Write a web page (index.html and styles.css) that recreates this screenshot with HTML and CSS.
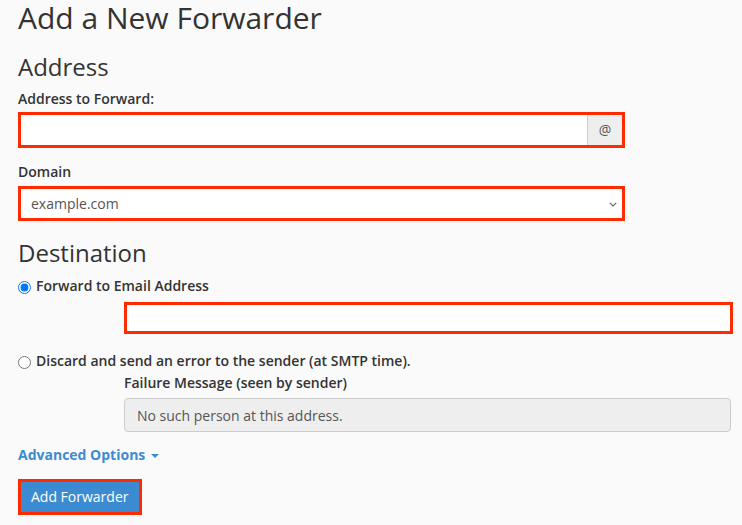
FILE: index.html
```html
<!DOCTYPE html>
<html lang="en">
<head>
<meta charset="utf-8">
<title>Add a New Forwarder</title>
<link rel="stylesheet" href="styles.css">
</head>
<body>
<main class="page">
  <h1 class="title">Add a New Forwarder</h1>

  <h2 class="section section-address">Address</h2>
  <label class="label label-first" for="email">Address to Forward:</label>
  <div class="input-group hl">
    <input id="email" class="group-input" type="text">
    <span class="addon">@</span>
  </div>

  <label class="label label-domain" for="domain">Domain</label>
  <div class="select-wrap hl">
    <select id="domain" class="select">
      <option>example.com</option>
    </select>
    <svg class="chev" width="8" height="5" viewBox="0 0 8 5" aria-hidden="true"><path d="M0.8 0.8 L4 4 L7.2 0.8" fill="none" stroke="#666" stroke-width="1.2"/></svg>
  </div>

  <h2 class="section section-dest">Destination</h2>
  <label class="radio-row radio-first">
    <input type="radio" name="dest" class="radio" checked>
    <span>Forward to Email Address</span>
  </label>
  <input class="fwd-input hl" type="text">

  <label class="radio-row radio-second">
    <input type="radio" name="dest" class="radio">
    <span>Discard and send an error to the sender (at SMTP time).</span>
  </label>
  <div class="fail-block">
    <label class="label label-fail" for="fail">Failure Message (seen by sender)</label>
    <input id="fail" class="fail-input" type="text" value="No such person at this address." disabled>
  </div>

  <a class="adv-link" href="#">Advanced Options <span class="caret"></span></a>

  <div class="actions">
    <button class="btn" type="button">Add Forwarder</button>
  </div>
</main>
</body>
</html>
```

FILE: styles.css
```css
* { box-sizing: border-box; }

html, body {
  margin: 0;
  padding: 0;
  background: #fafafa;
}

body {
  font-family: "Open Sans", "Noto Sans", "Liberation Sans", sans-serif;
  color: #333;
  font-size: 14px;
  line-height: 20px;
}

.page {
  padding: 0 0 0 18px;
  display: flex;
  flex-direction: column;
  align-items: flex-start;
}

.title {
  margin: 0;
  font-size: 30px;
  line-height: 36px;
  font-weight: 400;
  color: #333;
}

.section {
  margin: 0;
  font-size: 24px;
  line-height: 30px;
  font-weight: 400;
  color: #333;
}
.section-address { margin-top: 16px; }
.section-dest { margin-top: 17px; }

.label {
  display: block;
  font-weight: 600;
  font-size: 14px;
  line-height: 20px;
  color: #333;
}
.label-first { margin-top: 7px; }
.label-domain { margin-top: 14px; }

.hl { border: 3px solid #ff2a00; }

.input-group {
  margin-top: 3px;
  width: 607px;
  height: 36px;
  display: flex;
  background: #fff;
}
.group-input {
  flex: 1;
  border: 0;
  outline: none;
  background: #fff;
  font: inherit;
  padding: 0 10px;
}
.addon {
  width: 35px;
  flex: none;
  background: #eee;
  border-left: 1px solid #ccc;
  display: flex;
  align-items: center;
  justify-content: center;
  color: #555;
  font-size: 14px;
}

.select-wrap {
  margin-top: 4px;
  width: 607px;
  height: 35px;
  position: relative;
  background: #fff;
}
.select {
  appearance: none;
  -webkit-appearance: none;
  width: 100%;
  height: 100%;
  border: 0;
  outline: none;
  background: #fff;
  font: inherit;
  color: #555;
  padding: 0 0 0 10px;
}
.chev {
  position: absolute;
  right: 5px;
  top: 13px;
  pointer-events: none;
}

.radio-row {
  display: flex;
  align-items: center;
  gap: 5px;
  font-weight: 600;
  line-height: 20px;
  color: #333;
}
.radio-first { margin-top: 8px; }
.radio-second { margin-top: 17px; }

.radio {
  margin: 2px 0 0 0;
  width: 13px;
  height: 13px;
  flex: none;
}

.fwd-input {
  margin: 6px 0 0 106px;
  width: 609px;
  height: 32px;
  background: #fff;
  outline: none;
  font: inherit;
  padding: 0 10px;
}

.fail-block {
  margin-left: 106px;
  margin-top: 2px;
  display: flex;
  flex-direction: column;
}
.fail-input {
  margin-top: 5px;
  width: 607px;
  height: 34px;
  border: 1px solid #ccc;
  border-radius: 4px;
  background: #eee;
  color: #555;
  font: inherit;
  padding: 0 12px;
  opacity: 1;
  -webkit-text-fill-color: #555;
}

.adv-link {
  margin-top: 13px;
  font-weight: 700;
  color: #3d8ad0;
  text-decoration: none;
  line-height: 20px;
  display: inline-flex;
  align-items: center;
}
.caret {
  display: inline-block;
  width: 0;
  height: 0;
  margin-left: 6px;
  margin-top: 2px;
  border-top: 4px solid #3d8ad0;
  border-left: 4px solid transparent;
  border-right: 4px solid transparent;
}

.actions {
  margin-top: 14px;
}
.btn {
  height: 36px;
  border: 3px solid #ff2a00;
  background: #3b8bd3;
  color: #fff;
  font: inherit;
  font-size: 14px;
  padding: 0 10px;
  cursor: pointer;
}
```
